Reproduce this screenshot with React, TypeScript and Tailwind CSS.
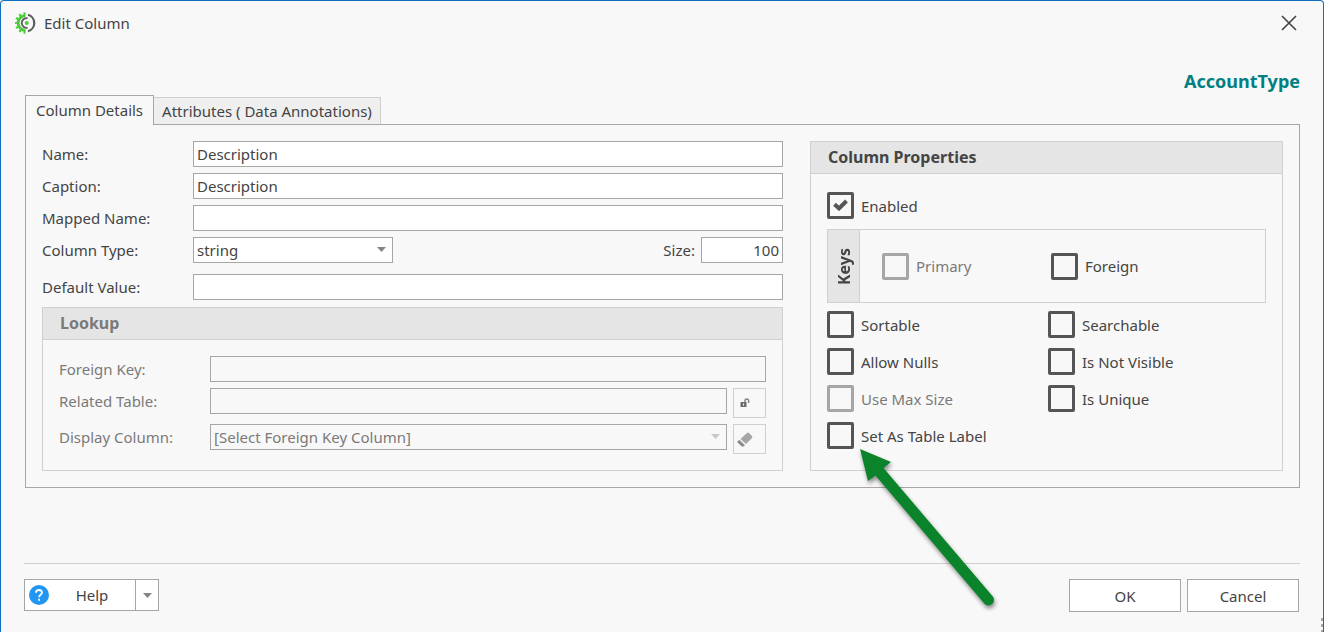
import type { ReactNode } from "react";

const inputClass =
  "h-[26px] w-full min-w-0 border border-[#a6a6a6] bg-white px-[3px] text-[#444] outline-none disabled:bg-[#f8f8f8] disabled:text-[#7a7a7a] disabled:opacity-100";

const Caret = ({ className = "text-[#858585]" }: { className?: string }) => (
  <svg width="9" height="5" viewBox="0 0 9 5" className={className} aria-hidden="true">
    <path d="M0 0h9L4.5 5z" fill="currentColor" />
  </svg>
);

const AppLogo = () => (
  <svg width="22" height="22" viewBox="0 0 22 22" fill="none" aria-hidden="true">
    <path d="M10.500 3.600A7.400 7.400 0 0 0 10.500 18.400" stroke="#4ccb3b" strokeWidth="3" />
    <path
      d="M10.500 1.600A9.400 9.400 0 0 0 10.500 20.400"
      stroke="#4ccb3b"
      strokeWidth="2.800"
      strokeDasharray="2 2.560"
    />
    <path d="M13 2.800a8.500 8.500 0 0 1 0 16.400" stroke="#5c5c5c" strokeWidth="2.200" />
    <path d="M12.600 6.200a4.900 4.900 0 1 0 0 9.600" stroke="#5c5c5c" strokeWidth="1.800" />
    <circle cx="11.700" cy="11" r="2" fill="#4ccb3b" />
  </svg>
);

const Field = ({ id, label, children }: { id: string; label: string; children: ReactNode }) => (
  <div className="flex items-start">
    <label htmlFor={id} className="w-[151px] shrink-0 leading-[26px]">
      {label}
    </label>
    <div className="flex min-w-0 flex-1 items-start gap-[6px]">{children}</div>
  </div>
);

type CheckProps = {
  label: string;
  checked?: boolean;
  disabled?: boolean;
};

const Check = ({ label, checked, disabled }: CheckProps) => (
  <label className={`flex items-center gap-[7px] ${disabled ? "text-[#7a7a7a]" : ""}`}>
    <span className="relative flex">
      <input
        type="checkbox"
        defaultChecked={checked}
        disabled={disabled}
        className="peer size-[27px] appearance-none rounded-[2px] border-3 border-[#555] disabled:border-[#a6a6a6]"
      />
      <svg
        width="15"
        height="12"
        viewBox="0 0 15 12"
        className="pointer-events-none absolute top-[7px] left-[6px] hidden peer-checked:block"
        aria-hidden="true"
      >
        <path d="M1.500 5.200 6 9.400 13.500 2" fill="none" stroke="#555" strokeWidth="4" />
      </svg>
    </span>
    {label}
  </label>
);

const Group = ({ title, muted, children }: { title: string; muted?: boolean; children: ReactNode }) => (
  <section className={`border border-[#d0d0d0] ${muted ? "text-[#7a7a7a]" : ""}`}>
    <h2 className="border-b border-[#d0d0d0] bg-[#e5e5e5] px-[17px] text-base leading-[31px] font-bold">{title}</h2>
    {children}
  </section>
);

const Lookup = () => (
  <Group title="Lookup" muted>
    <div className="flex flex-col gap-[6px] p-4">
      <Field id="foreign-key" label="Foreign Key:">
        <input id="foreign-key" disabled className={inputClass} />
      </Field>
      <Field id="related-table" label="Related Table:">
        <input id="related-table" disabled className={inputClass} />
        <button
          type="button"
          disabled
          aria-label="Unlock"
          className="flex h-[30px] w-[33px] shrink-0 items-center border border-[#d0d0d0] pl-[6px]"
        >
          <svg width="10" height="10" viewBox="0 0 10 10" aria-hidden="true">
            <path d="M5 4V2.600Q5 1 6.800 1T8.600 2.600V5" fill="none" stroke="#858585" strokeWidth="1.500" />
            <path d="M0.500 4h6v5h-6z" fill="#6e6e6e" />
            <path d="M3 5.500h1v2H3z" fill="#f8f8f8" />
          </svg>
        </button>
      </Field>
      <Field id="display-column" label="Display Column:">
        <div className="relative min-w-0 flex-1">
          <select id="display-column" disabled className={`${inputClass} block appearance-none`}>
            <option>[Select Foreign Key Column]</option>
          </select>
          <span className="pointer-events-none absolute top-[10px] right-[7px]">
            <Caret className="text-[#c8c8c8]" />
          </span>
        </div>
        <button
          type="button"
          disabled
          aria-label="Clear"
          className="flex h-[30px] w-[33px] shrink-0 items-center border border-[#d0d0d0] pl-[3px]"
        >
          <svg width="16" height="15" viewBox="0 0 16 15" aria-hidden="true">
            <path d="M10 1 Q11 0 12 1L15 4Q15.800 5 15 6L9 12 3.500 7z" fill="#a6a6a6" />
            <path d="M2.600 8 8 13.200 6.500 14.500H4.800L.5 10.400V9z" fill="#8c8c8c" />
          </svg>
        </button>
      </Field>
    </div>
  </Group>
);

const Arrow = () => (
  <svg
    width="150"
    height="170"
    viewBox="0 0 150 170"
    className="pointer-events-none absolute top-[26px] left-[33px] drop-shadow-[1px_3px_2px_rgba(0,0,0,0.45)]"
    aria-hidden="true"
  >
    <path d="M0 1 31 14 23.5 20 132.800 148.500A5.500 5.500 0 0 1 124.500 155.700L15.500 27.500 8 33z" fill="#0a832b" />
  </svg>
);

const ColumnProperties = () => (
  <Group title="Column Properties">
    <div className="px-4 pt-[18px] pb-[21px]">
      <Check label="Enabled" checked />
      <fieldset className="mt-[10px] flex h-[74px] border border-[#d0d0d0]">
        <span className="flex w-8 rotate-180 items-center justify-center border-l border-[#d0d0d0] bg-[#e5e5e5] text-base font-bold [writing-mode:vertical-rl]">
          Keys
        </span>
        <div className="grid flex-1 grid-cols-[169px_1fr] items-center pl-[22px]">
          <Check label="Primary" disabled />
          <Check label="Foreign" />
        </div>
      </fieldset>
      <div className="mt-2 grid grid-cols-[221px_1fr] gap-y-[10px]">
        <Check label="Sortable" />
        <Check label="Searchable" />
        <Check label="Allow Nulls" />
        <Check label="Is Not Visible" />
        <Check label="Use Max Size" disabled />
        <Check label="Is Unique" />
        <div className="relative">
          <Check label="Set As Table Label" />
          <Arrow />
        </div>
      </div>
    </div>
  </Group>
);

const Details = () => (
  <div>
    <div className="mb-[7px] flex flex-col gap-[6px]">
      <Field id="name" label="Name:">
        <input id="name" defaultValue="Description" className={inputClass} />
      </Field>
      <Field id="caption" label="Caption:">
        <input id="caption" defaultValue="Description" className={inputClass} />
      </Field>
      <Field id="mapped-name" label="Mapped Name:">
        <input id="mapped-name" className={inputClass} />
      </Field>
      <div className="mb-[5px]">
        <Field id="column-type" label="Column Type:">
          <div className="relative w-[200px]">
            <select id="column-type" className={`${inputClass} block appearance-none`}>
              <option>string</option>
            </select>
            <span className="pointer-events-none absolute top-[10px] right-[7px]">
              <Caret />
            </span>
          </div>
          <label htmlFor="size" className="ml-auto leading-[26px]">
            Size:
          </label>
          <div className="w-[82px]">
            <input id="size" defaultValue="100" className={`${inputClass} text-right`} />
          </div>
        </Field>
      </div>
      <Field id="default-value" label="Default Value:">
        <input id="default-value" className={inputClass} />
      </Field>
    </div>
    <Lookup />
  </div>
);

export default function App() {
  return (
    <div className="bg-white font-['Noto_Sans',sans-serif] text-[15px] leading-6 text-[#444]">
      <div className="relative flex min-h-screen flex-col rounded-t-[4px] border-x border-t border-[#106ebe] bg-[#f8f8f8]">
        <header className="flex h-11 items-center justify-between pr-[26px] pl-[14px]">
          <div className="flex items-center gap-[7px]">
            <AppLogo />
            <h1>Edit Column</h1>
          </div>
          <button type="button" aria-label="Close">
            <svg width="16" height="16" viewBox="0 0 16 16" aria-hidden="true">
              <path d="M1 1l14 14M15 1L1 15" stroke="#444" strokeWidth="1.600" />
            </svg>
          </button>
        </header>

        <main className="pr-[23px] pb-[75px] pl-6">
          <div className="pt-6 pb-[2px] text-right text-lg leading-6 font-bold text-[#008080]">AccountType</div>

          {/* Tabs */}
          <div role="tablist" className="flex items-end">
            <button
              type="button"
              role="tab"
              aria-selected="true"
              className="relative z-10 -mb-px h-[30px] border border-b-0 border-[#a6a6a6] bg-[#f8f8f8] px-[10px] pb-[2px]"
            >
              Column Details
            </button>
            <button
              type="button"
              role="tab"
              aria-selected="false"
              className="h-[27px] border border-b-0 border-l-0 border-[#d0d0d0] bg-[#efefef] px-2"
            >
              Attributes ( Data Annotations)
            </button>
          </div>

          <div className="grid grid-cols-[47fr_30fr] items-start gap-[27px] border border-[#a6a6a6] p-4">
            <Details />
            <ColumnProperties />
          </div>
        </main>

        <footer className="mx-[23px] mt-auto flex justify-between border-t border-[#d0d0d0] pt-[15px] pb-5">
          <div className="flex h-8 border border-[#a6a6a6] bg-white">
            <button type="button" className="flex w-[110px] items-center pl-1">
              <svg width="20" height="20" viewBox="0 0 20 20" aria-hidden="true">
                <circle cx="10" cy="10" r="10" fill="#2196f3" />
                <path
                  d="M7 7.800Q7 5 10 5t3 2.600q0 1.200-1.400 2.200T10.100 12.300M10.100 13.700v2"
                  fill="none"
                  stroke="#fff"
                  strokeWidth="1.800"
                />
              </svg>
              <span className="flex-1 text-center">Help</span>
            </button>
            <button
              type="button"
              aria-label="More help"
              className="flex w-[23px] items-center justify-center border-l border-[#a6a6a6]"
            >
              <Caret />
            </button>
          </div>
          <div className="flex gap-[6px] pr-px">
            <button type="button" className="h-[33px] w-28 border border-[#a6a6a6] bg-white">
              OK
            </button>
            <button type="button" className="h-[33px] w-28 border border-[#a6a6a6] bg-white">
              Cancel
            </button>
          </div>
        </footer>

        {/* Resize grip */}
        <svg width="3" height="15" className="absolute right-0 bottom-0" aria-hidden="true">
          <path d="M1 1h2v3h-2zM1 7h2v3h-2zM1 13h2v2h-2z" fill="#a6a6a6" />
        </svg>
      </div>
    </div>
  );
}
